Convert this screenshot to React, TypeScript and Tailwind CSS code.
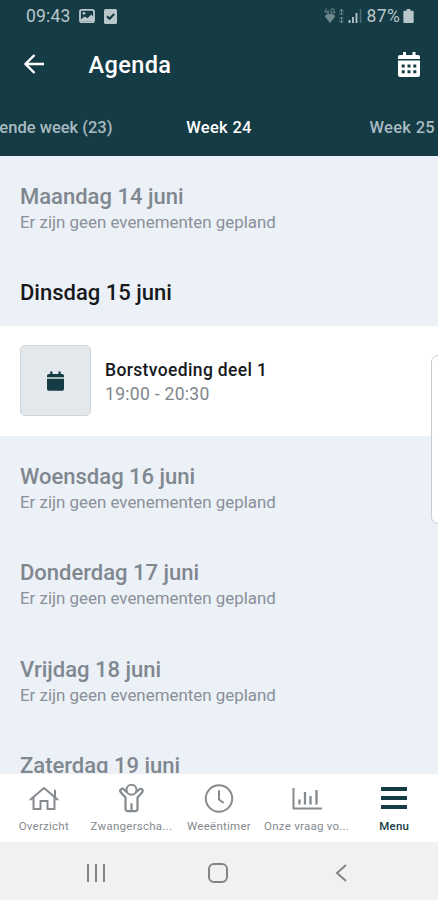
import type { ReactNode } from 'react'

const days = [
  { title: 'Maandag 14 juni' },
  { title: 'Dinsdag 15 juni', event: { name: 'Borstvoeding deel 1', time: '19:00 - 20:30' } },
  { title: 'Woensdag 16 juni' },
  { title: 'Donderdag 17 juni' },
  { title: 'Vrijdag 18 juni' },
  { title: 'Zaterdag 19 juni' },
]

function StatusBar() {
  return (
    <div className="h-8 flex items-center pl-[26px] pr-[24px] text-[#b9c7cb]">
      <span className="text-[17.5px] tracking-[0.2px]">09:43</span>
      <svg className="ml-[8px]" width="16" height="14" viewBox="0 0 17 15" fill="none">
        <rect x="1" y="1" width="15" height="13" rx="2" stroke="currentColor" strokeWidth="2" />
        <path d="M2 11l4-3 3 2 4-4 3 3v4H2z" fill="currentColor" />
        <circle cx="5.2" cy="4.6" r="1.5" fill="currentColor" />
      </svg>
      <svg className="ml-[9px]" width="13" height="15" viewBox="0 0 13 15" fill="none">
        <rect width="13" height="15" rx="1.5" fill="currentColor" />
        <path d="M3 7.2l2.6 2.6L10.2 5" stroke="#153b45" strokeWidth="2" />
      </svg>
      <svg className="ml-auto" width="38" height="16" viewBox="0 0 38 16">
        <g opacity="0.55">
          <path d="M2.5 0.5L0.8 4H5M4 2v4M10.5 1H7v4h3.500V3H9" stroke="currentColor" fill="none" />
          <path d="M0.5 8Q6 3.5 11.5 8L6 15z" fill="currentColor" />
          <path
            d="M17.5 1v5M15.5 3.5l2-2.5 2 2.5M15.5 6h4M17.5 9v6M15.5 12.5l2 2.5 2-2.5M15.5 10h4"
            stroke="currentColor"
            fill="none"
          />
        </g>
        <path d="M25.5 15v-3M29 15V9M32.5 15V5" stroke="currentColor" strokeWidth="1.8" />
        <path d="M36.5 15V1" stroke="currentColor" strokeWidth="1.6" opacity="0.35" />
      </svg>
      <span className="ml-[5px] text-[17.5px] tracking-[0.3px]">87%</span>
      <svg className="ml-[3px]" width="11" height="14" viewBox="0 0 11 15" fill="currentColor">
        <path d="M3.5 0h4v2H10a1 1 0 011 1v11a1 1 0 01-1 1H1a1 1 0 01-1-1V3a1 1 0 011-1h2.5z" />
      </svg>
    </div>
  )
}

function Header() {
  return (
    <header className="h-[155.5px] shrink-0 bg-[#153b45] flex flex-col">
      <StatusBar />
      <div className="h-16 flex items-center pl-[24px] pr-[18px] text-white">
        <svg className="-mt-px" width="20" height="20" viewBox="0 0 20 20" fill="none" stroke="currentColor" strokeWidth="2.4">
          <path d="M20 10H2M10.5 1L1.5 10l9 9" />
        </svg>
        <h1 className="ml-[44.5px] pt-[2px] text-[23.5px] leading-7 font-medium tracking-[0.4px]">Agenda</h1>
        <svg className="ml-auto" width="22" height="25" viewBox="0 0 22 25">
          <path
            fill="currentColor"
            d="M5 0h3v3h6.5V0h3v3H20a2 2 0 012 2v2H0V5a2 2 0 012-2h3z"
          />
          <path
            fill="currentColor"
            fillRule="evenodd"
            d="M0 8.5h22V23a2 2 0 01-2 2H2a2 2 0 01-2-2zM3.7 12.5v3h3v-3zm5.8 0v3h3v-3zm5.8 0v3h3v-3zM3.7 18.3v3h3v-3zm5.8 0v3h3v-3zm5.8 0v3h3v-3z"
          />
        </svg>
      </div>
      <div className="h-[59.5px] pt-[6px] grid grid-cols-[112.5px_1fr_112.5px] items-center overflow-hidden text-[16.5px] font-medium whitespace-nowrap text-[#a9bbc0]">
        <span className="justify-self-end">Volgende week (23)</span>
        <span className="text-center tracking-[0.3px] text-white">Week 24</span>
        <span className="justify-self-end pr-[3px] tracking-[0.3px]">Week 25</span>
      </div>
    </header>
  )
}

function EventRow({ name, time }: { name: string; time: string }) {
  return (
    <div className="mt-[20px] h-[109.5px] bg-white flex items-center px-5">
      <div className="size-[71px] rounded-[5px] border border-[#d0d5d9] bg-[#e3e8ec] flex items-center justify-center">
        <svg width="17" height="20" viewBox="0 0 17 20" fill="#153b45">
          <path d="M3.2 0.5h2.3V3h6V0.5h2.3V3h1.4A1.8 1.8 0 0117 4.8v1.4H0V4.8A1.8 1.8 0 011.8 3h1.4z" />
          <path d="M0 7.7h17V18a1.8 1.8 0 01-1.8 1.8H1.8A1.8 1.8 0 010 18z" />
        </svg>
      </div>
      <div className="ml-[14px] pt-[3px]">
        <p className="text-[17.5px] leading-6 font-medium tracking-[0.36px] text-[#17191c]">{name}</p>
        <p className="text-[17.5px] leading-[25px] tracking-[0.3px] text-[#7f868c]">{time}</p>
      </div>
    </div>
  )
}

function TabItem({ label, active, children }: { label: string; active?: boolean; children: ReactNode }) {
  return (
    <div
      className={`flex flex-col items-center pt-[9px] ${active ? 'text-[#153b45] font-medium' : 'text-[#858a8f]'}`}
    >
      <svg
        width="30"
        height="31"
        viewBox="0 0 30 31"
        fill="none"
        stroke="currentColor"
        strokeWidth="2"
        strokeLinecap="round"
        strokeLinejoin="round"
      >
        {children}
      </svg>
      <span className="mt-[4px] text-[11.5px] leading-4 tracking-[0.25px] whitespace-nowrap">{label}</span>
    </div>
  )
}

function TabBar() {
  return (
    <nav className="h-[69px] shrink-0 bg-white grid grid-cols-5 border-t border-[#eef0f3]">
      <TabItem label="Overzicht">
        <path d="M1.5 16.5L15 5l13.5 11.5M4.500 14.500V26h7v-8h7v8h7V14.500M26 13.500V7.500" />
      </TabItem>
      <TabItem label="Zwangerscha...">
        <circle cx="15.5" cy="6.800" r="5" />
        <path
          d="M10.500 9L8 6.500a2.100 2.100 0 00-3.200 2.800L9.500 14.500V26a2.200 2.200 0 002.200 2.200h7.600A2.200 2.200 0 0021.500 26V14.500L26.200 9.300A2.100 2.100 0 0023 6.500L20.500 9M15.500 21v7"
          strokeWidth="2.200"
        />
      </TabItem>
      <TabItem label="Weeëntimer">
        <circle cx="15" cy="15.5" r="13.2" />
        <path d="M15 8v8.500l4 3" />
      </TabItem>
      <TabItem label="Onze vraag vo...">
        <path d="M1.5 5v20.5H30" strokeLinecap="butt" />
        <path d="M7.5 21.500v-5M13 21.500V9M18.500 21.500v-8.500M24.500 21.500V7" strokeWidth="2.3" strokeLinecap="butt" />
      </TabItem>
      <TabItem label="Menu" active>
        <path d="M2 6h26M2 15h26M2 24h26" strokeWidth="3.8" strokeLinecap="butt" />
      </TabItem>
    </nav>
  )
}

function SystemNav() {
  return (
    <div className="h-[58px] pt-[3px] shrink-0 bg-[#f1f1f1] grid grid-cols-[35px_1fr_1fr_1fr_36px] items-center text-[#848484]">
      <svg
        className="col-start-2 justify-self-center"
        width="20"
        height="18"
        viewBox="0 0 20 18"
        stroke="currentColor"
        strokeWidth="2"
      >
        <path d="M2 0v18M10 0v18M18 0v18" />
      </svg>
      <svg
        className="justify-self-center"
        width="20"
        height="20"
        viewBox="0 0 20 20"
        fill="none"
        stroke="currentColor"
        strokeWidth="2"
      >
        <rect x="1" y="1" width="18" height="18" rx="5" />
      </svg>
      <svg
        className="justify-self-center"
        width="12"
        height="18"
        viewBox="0 0 12 18"
        fill="none"
        stroke="currentColor"
        strokeWidth="2"
      >
        <path d="M11 1L2 9l9 8" />
      </svg>
    </div>
  )
}

export default function App() {
  return (
    <div className="relative w-[438px] h-[900px] flex flex-col overflow-hidden bg-[#ecf0f7] font-['Roboto',sans-serif]">
      <Header />
      <main className="flex-1 min-h-0 overflow-hidden">
        {days.map(({ title, event }) => (
          <section key={title} className="pt-[28px]">
            <h2
              className={`px-5 text-[22px] leading-[26px] font-medium ${event ? 'text-[#17191c]' : 'text-[#7f878f]'}`}
            >
              {title}
            </h2>
            {event ? (
              <EventRow {...event} />
            ) : (
              <p className="px-5 h-[42.5px] text-[16.9px] leading-[25px] text-[#8a9199]">
                Er zijn geen evenementen gepland
              </p>
            )}
          </section>
        ))}
      </main>
      <TabBar />
      <SystemNav />

      {/* Edge panel handle */}
      <div className="absolute -right-[10px] top-[355px] w-[17px] h-[169px] rounded-[7px] border border-[#c9cbce] bg-white/90" />
    </div>
  )
}
